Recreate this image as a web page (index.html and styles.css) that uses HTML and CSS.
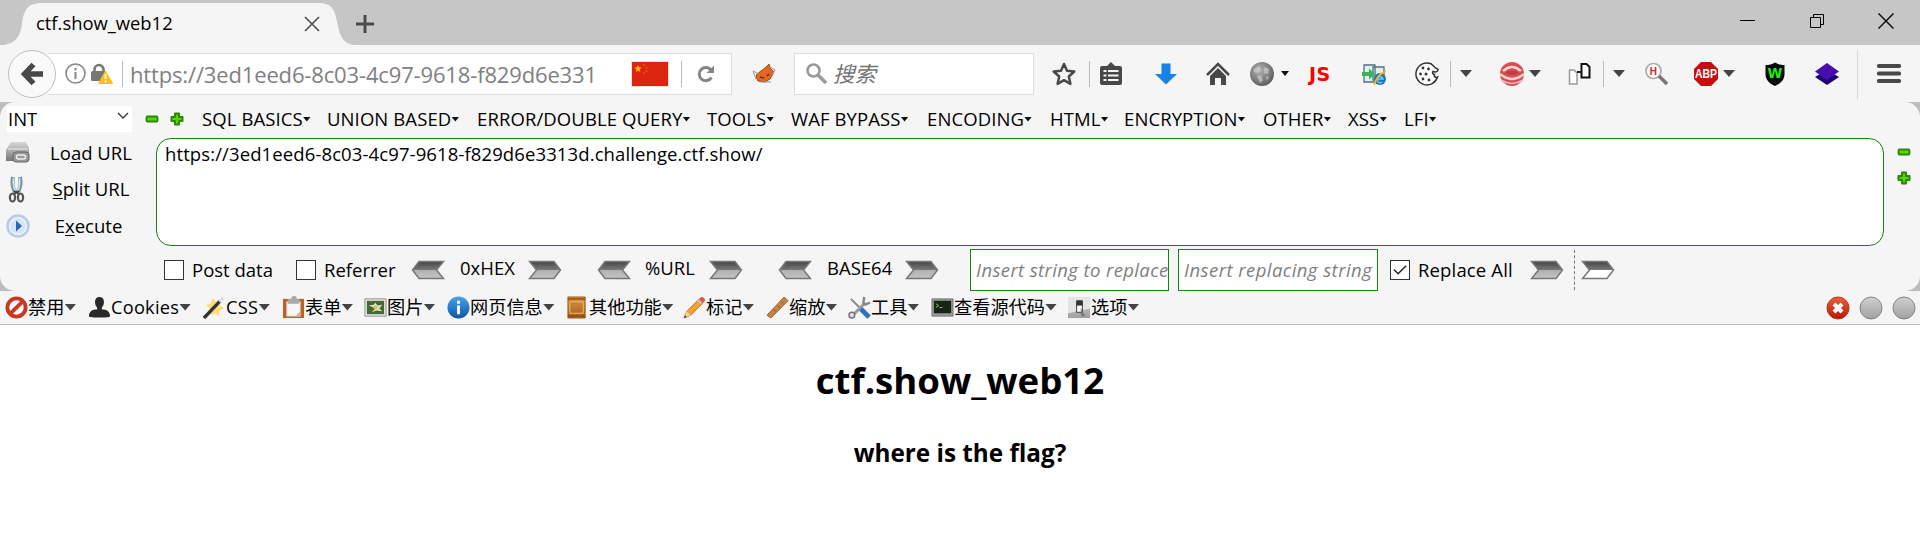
FILE: index.html
```
<!DOCTYPE html>
<html lang="zh-CN">
<head>
<meta charset="utf-8">
<title>ctf.show_web12</title>
<link rel="stylesheet" href="styles.css">
</head>
<body>
<svg class="defs" aria-hidden="true">
  <defs>
    <linearGradient id="g-steel" x1="0" y1="0" x2="0" y2="1"><stop offset="0" stop-color="#444"/><stop offset=".48" stop-color="#777"/><stop offset=".52" stop-color="#b0b0b0"/><stop offset="1" stop-color="#c4c4c4"/></linearGradient>
    <linearGradient id="g-hollow" x1="0" y1="0" x2="0" y2="1"><stop offset="0" stop-color="#444"/><stop offset=".48" stop-color="#777"/><stop offset=".52" stop-color="#fff"/><stop offset="1" stop-color="#fff"/></linearGradient>
    <linearGradient id="g-ball" x1="0" y1="0" x2="0" y2="1"><stop offset="0" stop-color="#d0d0d0"/><stop offset="1" stop-color="#a0a0a0"/></linearGradient>
    <linearGradient id="g-red" x1="0" y1="0" x2="0" y2="1"><stop offset="0" stop-color="#ee6040"/><stop offset="1" stop-color="#b81800"/></linearGradient>
    <linearGradient id="g-blue" x1="0" y1="0" x2="0" y2="1"><stop offset="0" stop-color="#4ba3ea"/><stop offset="1" stop-color="#0b55a8"/></linearGradient>
    <linearGradient id="g-wood" x1="0" y1="0" x2="0" y2="1"><stop offset="0" stop-color="#d79545"/><stop offset="1" stop-color="#a95c17"/></linearGradient>
    <linearGradient id="g-gray" x1="0" y1="0" x2="0" y2="1"><stop offset="0" stop-color="#d8d8d8"/><stop offset="1" stop-color="#777"/></linearGradient>
    <radialGradient id="g-globe" cx=".4" cy=".35" r=".7"><stop offset="0" stop-color="#b4b4b4"/><stop offset="1" stop-color="#5a5a5a"/></radialGradient>
    <symbol id="i-right" viewBox="0 0 34 20"><path d="M1.500 1.500H26L32.500 10 26 18.500H1.500L8.500 10z" fill="url(#g-steel)" stroke="#777" stroke-width="1.500"/></symbol>
    <symbol id="i-plus" viewBox="0 0 14 14"><path d="M5 1.500h4V5h3.500v4H9v3.500H5V9H1.500V5H5z" fill="#58d400" stroke="#2a8a04" stroke-width="2" stroke-linejoin="round"/></symbol>
    <symbol id="i-minus" viewBox="0 0 14 14"><rect x="1.500" y="4.500" width="11" height="5" rx="1" fill="#58d400" stroke="#2a8a04" stroke-width="1.800"/></symbol>
  </defs>
</svg>

<header class="titlebar">
  <svg class="tab-shape" viewBox="0 0 356 45" width="356" height="45"><path d="M0 45C15 45 20 37 22 24 24 9 28 3 42 3H318C332 3 335 9 337.500 24 340 37 344 45 356 45z" fill="#f5f5f5"/></svg>
  <span class="tab-title">ctf.show_web12</span>
  <svg class="tab-close" width="16" height="16" viewBox="0 0 16 16"><path d="M1 1l14 14M15 1L1 15" stroke="#555" stroke-width="1.700"/></svg>
  <svg class="tab-new" width="18" height="18" viewBox="0 0 18 18"><path d="M9 0v18M0 9h18" stroke="#4a4a4a" stroke-width="3"/></svg>
  <div class="win-controls">
    <svg width="16" height="16" viewBox="0 0 16 16"><path d="M0 7.500h15" stroke="#000"/></svg>
    <svg width="16" height="16" viewBox="0 0 16 16"><path d="M1.500 4.500h10v10h-10zM4.500 4.500v-3h10v10h-3" fill="none" stroke="#000"/></svg>
    <svg width="16" height="16" viewBox="0 0 16 16"><path d="M.5.5l15 15M15.500.5l-15 15" stroke="#111" stroke-width="1.500"/></svg>
  </div>
</header>

<nav class="toolbar">
  <div class="back"><svg width="24" height="24" viewBox="0 0 24 24"><path d="M13.500 2.500L4.500 12l9 9.500M5 12h18" fill="none" stroke="#484848" stroke-width="5.400"/></svg></div>
  <div class="urlbar">
    <svg class="info" width="21" height="21" viewBox="0 0 21 21"><circle cx="10.500" cy="10.500" r="9.500" fill="none" stroke="#858585" stroke-width="1.600"/><path d="M10.500 9v7M10.500 5v2.500" stroke="#858585" stroke-width="2"/></svg>
    <svg class="lock" width="22" height="22" viewBox="0 0 22 22"><path d="M3.500 9V6.500a4.500 4.500 0 0 1 9 0V9" fill="none" stroke="#777" stroke-width="2.600"/><rect x="0" y="8" width="15" height="10" rx="1.500" fill="#777"/><path d="M14.500 8L21.500 20.500H7.500z" fill="#ffbf18" stroke="#ffbf18" stroke-linejoin="round"/><path d="M14.500 11v5M14.500 17.500v2" stroke="#fff" stroke-width="1.800"/></svg>
    <i class="vline"></i>
    <span class="url">https://3ed1eed6-8c03-4c97-9618-f829d6e331</span>
    <svg class="flag" width="38" height="26" viewBox="0 0 38 26"><path fill="#eadfda" d="M0 0h38v26H0z"/><path fill="#dc2410" d="M1 1h36v24H1z"/><path d="M7 4l1 2.600h2.800L8.600 8.300l.8 2.700L7 9.400 4.600 11l.8-2.700L3.200 6.600H6z" fill="#ffc400"/><g fill="#e8590f"><circle cx="13" cy="4" r="1"/><circle cx="15.500" cy="6.500" r="1"/><circle cx="15.500" cy="10" r="1"/><circle cx="13" cy="12" r="1"/></g></svg>
    <i class="vline"></i>
    <svg class="reload" width="18" height="18" viewBox="0 0 18 18"><path d="M14 5A6.600 6.600 0 1 0 14.500 12.500" fill="none" stroke="#858585" stroke-width="3"/><path d="M17 .5V8H9.500z" fill="#858585"/></svg>
  </div>
  <svg class="fox" width="24" height="24" viewBox="0 0 24 24"><path d="M5 12L13 6l4-4 1 4 4 4-4 7-5 3-7-1-2-4z" fill="#e3681c" stroke="#a34b18"/><path d="M1 9l6 3M18 5l5 3-3 5M1 9l3 8M8 20h11" fill="none" stroke="#999"/><path d="M8 15l4 1M15 14l2-2" stroke="#65290c" stroke-width="1.500"/></svg>
  <div class="search">
    <svg width="21" height="21" viewBox="0 0 21 21"><circle cx="7.500" cy="7.500" r="6" fill="none" stroke="#999" stroke-width="2.600"/><path d="M12 12l8 8" stroke="#999" stroke-width="3.400"/></svg>
    <span>搜索</span>
  </div>
  <div class="tools">
    <svg viewBox="0 0 24 24"><path d="M12 2l3 6.800 7.300.7-5.500 5 1.600 7.300L12 18.200l-6.400 3.600 1.600-7.300-5.500-5L9 8.800z" fill="none" stroke="#484848" stroke-width="2.500" stroke-linejoin="round"/></svg>
    <i class="vline"></i>
    <svg viewBox="0 0 24 24"><path d="M3 4h5l4-4 4 4h5a2 2 0 0 1 2 2v15a2 2 0 0 1-2 2H3a2 2 0 0 1-2-2V6a2 2 0 0 1 2-2z" fill="#484848"/><path d="M4.500 9h3M9 9h10.500M4.500 13.500h3M9 13.500h10.500M4.500 18h3M9 18h10.500" stroke="#f5f5f5" stroke-width="2.200"/></svg>
    <svg viewBox="0 0 24 24"><path d="M7.500 1.500h9V12H23L12 22.500 1 12h6.500z" fill="#1982e6"/></svg>
    <svg viewBox="0 0 24 24"><path d="M1 13L12 2l11 11" fill="none" stroke="#484848" stroke-width="2.500"/><path d="M4 14l8-8 8 8v9h-5v-7H9v7H4z" fill="#484848"/></svg>
    <svg viewBox="0 0 24 24"><circle cx="12" cy="12" r="12" fill="url(#g-globe)"/><path d="M4 7l5-3 2 3-3 4-4-1zM14 5l5 2-1 5-4-1zM7 14l4-1 2 5-3 3zM16 15l3-1-2 5z" fill="#ccc" opacity=".7"/></svg>
    <i class="caret small"></i>
    <b class="js">JS</b>
    <svg viewBox="0 0 24 24"><path d="M2 3h11v17H2zM11 5h11v13H11z" fill="#e6edf0" stroke="#527080" stroke-width="1.300"/><circle cx="18" cy="17" r="6" fill="#1e78bd"/><path d="M15 17h6a3 3 0 1 0-1 3" fill="none" stroke="#74c8f2" stroke-width="1.500"/><path d="M12 23C14 16 19 11 24 9" fill="none" stroke="#f1b818" stroke-width="1.800"/><path d="M0 10h7V6.500l6 5.500-6 5.500V14H0z" fill="#38b557"/></svg>
    <svg viewBox="0 0 24 24"><path d="M16 1.700A11 11 0 1 0 22.500 15c-2 1-4-.5-3-2.500C18 12.500 17 11 18 9.500c3 1 5 0 5-2L20.500 6z" fill="#fff" stroke="#333" stroke-width="1.500"/><g fill="#333"><circle cx="8" cy="6" r="1.400"/><circle cx="13.500" cy="7" r="1.400"/><circle cx="5.500" cy="12" r="1.400"/><circle cx="11" cy="12" r="1.500"/><circle cx="8" cy="17" r="1.400"/><circle cx="14" cy="18" r="1.400"/></g></svg>
    <i class="vline"></i>
    <i class="caret"></i>
    <svg viewBox="0 0 24 24"><circle cx="12" cy="12" r="12" fill="#d25052"/><path d="M3 9q9-8 18 0M0 12q12 10 24 0" fill="none" stroke="#f7d0cf" stroke-width="2.500"/><path d="M5 10.500q7-4 14 0-7 5-14 0z" fill="#c23b40"/><path d="M1 18q11 7 22 0" fill="none" stroke="#f4bcbc" stroke-width="1.500"/></svg>
    <i class="caret"></i>
    <svg viewBox="0 0 24 24"><path d="M1.500 8H6l3 3v11H1.500z" fill="#fff" stroke="#999" stroke-width="1.500"/><path d="M13.500 2h5L21.500 5v10.500h-8z" fill="#fff" stroke="#111" stroke-width="2"/><path d="M9 10h5" stroke="#222" stroke-width="2"/></svg>
    <i class="vline"></i>
    <i class="caret"></i>
    <svg viewBox="0 0 24 24"><circle cx="8.500" cy="9" r="7.500" fill="#fff" stroke="#aaa" stroke-width="1.700"/><path d="M14 14l8 8" stroke="#777" stroke-width="3.500"/><text x="4.800" y="12.500" class="glyph-h">H</text></svg>
    <svg viewBox="0 0 24 24"><path d="M7 0h10l7 7v10l-7 7H7l-7-7V7z" fill="#c70d0d"/><text x="12" y="16.400" class="glyph-abp" textLength="22" lengthAdjust="spacingAndGlyphs">ABP</text></svg>
    <i class="caret"></i>
    <svg viewBox="0 0 24 24"><path d="M12 .5c3 2 6 2.500 9.500 2.500v9c0 6-4 9.500-9.500 12-5.500-2.500-9.500-6-9.500-12V3C6 3 9 2.500 12 .5z" fill="#080808"/><text x="12" y="16" class="glyph-w">W</text></svg>
    <svg viewBox="0 0 24 24"><path d="M0 15l12-7 12 7-12 8z" fill="#1c0078"/><path d="M0 9.500L12 1l12 8.500L12 18z" fill="#4a0cb0"/></svg>
    <i class="vline tall"></i>
    <svg viewBox="0 0 24 24"><path d="M2 4h20M2 11.500h20M2 19h20" stroke="#484848" stroke-width="4.200" stroke-linecap="round"/></svg>
  </div>
</nav>

<div class="hackbar-wrap"><section class="hackbar">
  <div class="menus">
    <div class="select"><span>INT</span><svg width="12" height="8" viewBox="0 0 12 8"><path d="M1 1l5 5 5-5" fill="none" stroke="#333" stroke-width="1.300"/></svg></div>
    <svg class="mark"><use href="#i-minus"/></svg>
    <svg class="mark"><use href="#i-plus"/></svg>
    <div class="menu-list">
      <span>SQL BASICS</span><span>UNION BASED</span><span>ERROR/DOUBLE QUERY</span><span>TOOLS</span><span>WAF BYPASS</span><span>ENCODING</span><span>HTML</span><span>ENCRYPTION</span><span>OTHER</span><span>XSS</span><span>LFI</span>
    </div>
  </div>
  <div class="workspace">
    <div class="actions">
      <div><svg width="26" height="26" viewBox="0 0 26 26"><path d="M6 2h15l3 6v13H1V10z" fill="url(#g-gray)"/><path d="M3 9h20" stroke="#eee"/><rect x="8" y="12" width="16" height="10" rx="3" fill="#999" stroke="#666"/><rect x="11.500" y="15" width="9" height="4" rx="2" fill="none" stroke="#eee" stroke-width="1.500"/></svg><span>Lo<u>a</u>d URL</span></div>
      <div><svg width="26" height="28" viewBox="0 0 26 28"><path d="M8 2q-2 10 3 16M15 2q2 10-3 16" fill="none" stroke="#7894a2" stroke-width="4"/><path d="M8.500 3q-1 8 2 13M14.500 3q1 8-2 13" fill="none" stroke="#d6e6ec" stroke-width="1.500"/><path d="M9 19l5-3M14 19l-5-3" stroke="#444" stroke-width="2"/><ellipse cx="7.500" cy="22.500" rx="2.600" ry="4" fill="none" stroke="#555" stroke-width="2.200"/><ellipse cx="15.500" cy="22.500" rx="2.600" ry="4" fill="none" stroke="#555" stroke-width="2.200"/></svg><span><u>S</u>plit URL</span></div>
      <div><svg width="26" height="26" viewBox="0 0 26 26"><circle cx="13" cy="13" r="10.500" fill="#eaf1fb" stroke="#b6cbe8" stroke-width="2.500"/><circle cx="13" cy="13" r="7.500" fill="#d5e4f6"/><path d="M11 7.500l6 5.500-6 5.500z" fill="#2866b4"/></svg><span class="exec">E<u>x</u>ecute</span></div>
    </div>
    <div class="editor">https://3ed1eed6-8c03-4c97-9618-f829d6e3313d.challenge.ctf.show/</div>
    <div class="side"><svg class="mark"><use href="#i-minus"/></svg><svg class="mark"><use href="#i-plus"/></svg></div>
  </div>
  <div class="options">
    <i class="box"></i><span>Post data</span><i class="box"></i><span>Referrer</span>
    <svg class="arrow left"><use href="#i-right"/></svg><span class="up">0xHEX</span><svg class="arrow"><use href="#i-right"/></svg>
    <svg class="arrow left"><use href="#i-right"/></svg><span class="up">%URL</span><svg class="arrow"><use href="#i-right"/></svg>
    <svg class="arrow left"><use href="#i-right"/></svg><span class="up">BASE64</span><svg class="arrow"><use href="#i-right"/></svg>
    <div class="field">Insert string to replace</div><div class="field">Insert replacing string</div>
    <i class="box"><svg width="18" height="18" viewBox="0 0 19 19"><path d="M3 9l4.500 4.500L16 5" fill="none" stroke="#222" stroke-width="1.600"/></svg></i><span class="replace-all">Replace All</span>
    <svg class="arrow"><use href="#i-right"/></svg><i class="dash"></i>
    <svg class="arrow" viewBox="0 0 34 20"><path d="M1.500 1.500H26L32.500 10 26 18.500H1.500L8.500 10z" fill="url(#g-hollow)" stroke="#777" stroke-width="1.500"/></svg>
  </div>
</section></div>

<section class="devbar">
  <div class="dev-list">
    <span><svg viewBox="0 0 24 24"><circle cx="12" cy="12" r="9.500" fill="#fff" stroke="#c93822" stroke-width="4"/><path d="M5.500 18.500l13-13" stroke="#c93822" stroke-width="4"/></svg>禁用</span>
    <span><svg viewBox="0 0 24 24"><path d="M12 1c6 0 5.500 8 2.500 11v2c5 0 8.500 2 8.500 7 0 2-22 2-22 0 0-5 3.500-7 8.500-7v-2C6.500 9 6 1 12 1z" fill="#292929"/></svg>Cookies</span>
    <span><svg viewBox="0 0 24 24"><path d="M10 2l3 4 5-2-1 5 5 4-5 2v6l-5-3-4 2V14L3 9l5-1z" fill="#ffdc78"/><path d="M1 23L18 5" stroke="#333" stroke-width="3.500"/><path d="M17 6l4-4" stroke="#ddd" stroke-width="3"/></svg>CSS</span>
    <span><svg viewBox="0 0 24 24"><path d="M1 3h22v20H1z" fill="#b96424"/><path d="M5 6h14v15H5z" fill="#f7f7f7" stroke="#ccc"/><path d="M6 3h3l2-3h3l2 3h2v5H6z" fill="#aaa"/><path d="M14 21l5-5v5z" fill="#bbb"/></svg>表单</span>
    <span><svg viewBox="0 0 24 24"><path d="M1 3h22v18H1z" fill="#eee" stroke="#888"/><path d="M3 5h18v14H3z" fill="#476830"/><path d="M12 13L5 10l5-1 2-2 2 3 5-1-3 4 3 3-6-1-5 2z" fill="#dfe3d0"/><circle cx="12" cy="12" r="2" fill="#d9c33d"/></svg>图片</span>
    <span><svg viewBox="0 0 24 24"><circle cx="12" cy="12" r="11.500" fill="url(#g-blue)"/><path d="M12 10v9M12 5v3" stroke="#fff" stroke-width="3"/></svg>网页信息</span>
    <span><svg viewBox="0 0 24 24"><path d="M2 1h18v22H2z" fill="url(#g-wood)" stroke="#a2601f"/><path d="M4 6h14v12H4z" fill="none" stroke="#edbd70"/><path d="M2 3h18M2 21h18" stroke="#884512" stroke-width="1.500"/></svg>其他功能</span>
    <span><svg viewBox="0 0 24 24"><path d="M1 23l3-7L17 3l4 4L8 20z" fill="#f2a330" stroke="#bd701c"/><path d="M1 23l3-7 4 4z" fill="#f4d2a2"/><path d="M17 3l2-2q4 0 4 4l-2 2z" fill="#d75458"/><path d="M15 4l4 4" stroke="#ccc" stroke-width="2"/><path d="M1 23l1-3 2 2z" fill="#333"/></svg>标记</span>
    <span><svg viewBox="0 0 24 24"><path d="M1 20L19 1l4 4L5 23z" fill="#c58347" stroke="#9b6030"/><path d="M8 14l2 2M12 10l2 2M16 6l2 2" stroke="#805020"/></svg>缩放</span>
    <span><svg viewBox="0 0 24 24"><path d="M3 3l10 10" stroke="#888" stroke-width="2"/><path d="M13 13l9 9" stroke="#2b70c4" stroke-width="5"/><path d="M5 20L18 7" stroke="#999" stroke-width="3"/><path d="M17 1l-1 6 2 2 5-2" fill="none" stroke="#888" stroke-width="2.500"/><circle cx="4" cy="20" r="3" fill="#ddd" stroke="#777" stroke-width="1.500"/></svg>工具</span>
    <span><svg viewBox="0 0 24 24"><path d="M1 3h22v18H1z" fill="#999" stroke="#777"/><path d="M3 5h18v13H3z" fill="#172315"/><path d="M5 8l3 2-3 2M9 12h3" fill="none" stroke="#91c553"/></svg>查看源代码</span>
    <span><svg viewBox="0 0 24 24"><path d="M0 1h23v22H0z" fill="url(#g-ball)"/><path d="M0 1h23v12L0 18z" fill="#e4e4e4"/><path d="M9 5h6v12H9z" fill="#fff" stroke="#333"/><path d="M9 5h6v5H9z" fill="#333"/><path d="M13 12l5 9h-4z" fill="#777"/></svg>选项</span>
  </div>
  <div class="status">
    <svg viewBox="0 0 24 24"><circle cx="12" cy="12" r="11" fill="url(#g-red)" stroke="#b9371f"/><path d="M8 8l8 8M16 8l-8 8" stroke="#fff" stroke-width="4"/></svg>
    <svg viewBox="0 0 24 24"><circle cx="12" cy="12" r="11" fill="url(#g-ball)" stroke="#858585"/></svg>
    <svg viewBox="0 0 24 24"><circle cx="12" cy="12" r="11" fill="url(#g-ball)" stroke="#858585"/></svg>
  </div>
</section>

<main class="page">
  <h1>ctf.show_web12</h1>
  <h2>where is the flag?</h2>
</main>
</body>
</html>
```
FILE: styles.css
```
* { box-sizing: border-box; }
body {
  margin: 0;
  height: 544px;
  overflow: hidden;
  background: #fff;
  color: #000;
  font: 18.5px/24px "Open Sans", "Noto Sans CJK SC", sans-serif;
  white-space: nowrap;
}
svg { display: block; flex: none; }
i { display: block; flex: none; font-style: normal; }
.defs { position: absolute; width: 0; height: 0; }

/* window title and tab */
.titlebar { display: flex; height: 45px; background: #c6c6c6; position: relative; padding-left: 36px; }
.tab-shape { position: absolute; left: 0; top: 0; }
.tab-title { position: relative; width: 268px; padding-top: 11px; font-size: 18.4px; }
.tab-close { position: relative; margin-top: 16px; }
.tab-new { margin: 15px 0 0 36px; }
.win-controls { display: flex; gap: 53px; margin: 13px 26px 0 auto; }

/* navigation */
.toolbar { display: flex; align-items: center; height: 57px; background: #f5f5f5; padding-left: 8px; }
.back { display: grid; place-items: center; flex: none; width: 48px; height: 48px; border: 1px solid #c0c0c0; border-radius: 50%; background: #fafafa; z-index: 1; }
.urlbar { display: flex; align-items: center; flex: none; width: 684px; height: 42px; margin-left: -8px; padding-left: 17px; border: 1px solid #ddd; border-left: 0; background: #fff; }
.lock { margin: 0 9px 0 5px; }
.vline { width: 1px; height: 26px; background: #bbb; }
.vline.tall { height: 50px; background: #d8d8d8; }
.url { flex: none; width: 508px; padding-left: 7px; color: #808080; font-size: 22px; letter-spacing: -.15px; line-height: 30px; }
.flag { margin-right: 12px; }
.reload { margin-left: 15px; }
.fox { margin-left: 20px; }
.search { display: flex; align-items: center; gap: 6px; flex: none; width: 240px; height: 42px; margin: 0 18px; padding-left: 11px; border: 1px solid #ddd; background: #fff; color: #757575; font-size: 21.5px; font-style: italic; }
.tools { display: grid; align-items: center; grid-template-columns: 37px 10px 55px 52px 44px 31px 28px 53px 53px 35px 10px 40px 29px 39px 35px 10px 32px 49px 29px 40px 52px 42px 20px 43px; }
.tools svg { width: 24px; height: 24px; }
.caret { width: 12px; height: 7px; background: #444; clip-path: polygon(0 0, 100% 0, 50% 100%); }
.caret.small { width: 8px; height: 5px; background: #111; }
.js { color: #f00; font: bold 19px/24px "DejaVu Sans", sans-serif; letter-spacing: .5px; }
.glyph-h { fill: #e02020; font: bold 10px "Liberation Sans", sans-serif; }
.glyph-abp { fill: #fff; font: bold 12px "Liberation Sans", sans-serif; text-anchor: middle; }
.glyph-w { fill: #16ed16; font: bold 13.5px "DejaVu Sans", sans-serif; text-anchor: middle; }

/* hackbar */
.hackbar-wrap { height: 189px; background: #bcbcbc; }
.hackbar { height: 189px; border-radius: 15px; background: #f5f5f5; }
.menus { display: flex; align-items: center; height: 34px; padding-left: 7px; }
.select { display: flex; justify-content: space-between; align-items: center; width: 125px; height: 26px; margin-top: -1px; padding: 0 3px 0 1px; background: #fff; }
.select svg { margin-top: -5px; }
.mark { width: 14px; height: 14px; }
.menus > .mark { margin-left: 11px; }
.menus > .mark:first-of-type { margin-left: 13px; }
.menu-list { display: grid; margin-left: 18px; grid-template-columns: 125px 150px 230px 84px 136px 123px 74px 139px 85px 56px 50px; letter-spacing: .1px; }
.menu-list span { display: flex; align-items: center; }
.menu-list span::after { content: ""; width: 8px; height: 5px; background: #111; clip-path: polygon(0 0, 100% 0, 50% 100%); }
.workspace { display: flex; height: 113px; }
.actions { width: 156px; margin-top: -1px; }
.actions div { display: flex; align-items: center; height: 36.3px; padding-left: 5px; }
.actions span { width: 120px; text-align: center; }
.actions .exec { width: 115px; }
.actions u { text-decoration-thickness: 1px; text-underline-offset: 2px; }
.editor { width: 1728px; height: 108px; margin-top: 2px; padding: 3px 8px; border: 1px solid #178017; border-radius: 15px; background: #fff; letter-spacing: .11px; }
.side { display: grid; align-content: start; gap: 12px; padding: 9px 0 0 13px; }
.options { display: grid; align-items: center; height: 42px; padding-left: 164px;
  grid-template-columns: 28px 104px 28px 87px 49px 68px 69px 48px 64px 69px 49px 78px 65px 208px 212px 28px 112px 44px 7px 34px; }
.box { width: 20px; height: 20px; border: 1px solid #333; background: #fff; }
.arrow { width: 34px; height: 20px; margin-top: -1px; }
.arrow.left { transform: scaleX(-1); }
.up { margin-top: -4px; }
.replace-all { letter-spacing: .15px; }
.field { width: 199px; height: 42px; padding-left: 5px; border: 1px solid #178017; background: #fff; color: #808080; font-style: italic; letter-spacing: .38px; line-height: 40px; overflow: hidden; }
.field + .field { width: 200px; letter-spacing: .45px; }
.dash { height: 40px; border-left: 1px dashed #777; }

/* page tools */
.devbar { display: flex; justify-content: space-between; height: 34px; padding: 0 4px 0 5px; border-bottom: 1px solid #b8b8b8; background: #f5f5f5; }
.dev-list { display: grid; align-items: center; font-size: 18.2px; line-height: 22px; padding-bottom: 1px; grid-template-columns: 83px 115px 79px 82px 83px 119px 117px 83px 82px 83px 137px 80px; }
.dev-list span { display: flex; align-items: center; }
.dev-list span:nth-child(2) { letter-spacing: .25px; }
.dev-list span:nth-child(3) { letter-spacing: .3px; }
.dev-list svg { width: 23px; height: 23px; }
.dev-list span::after { content: ""; width: 12px; height: 7px; background: #444; clip-path: polygon(0 0, 100% 0, 50% 100%); }
.status { display: flex; align-items: center; gap: 9px; }
.status svg { width: 24px; height: 24px; }

.page { text-align: center; }
.page h1 { margin: 30px 0 0; font-size: 36.6px; line-height: 50px; }
.page h2 { margin: 31px 0 0; font-size: 24.300px; line-height: 34px; }
```
